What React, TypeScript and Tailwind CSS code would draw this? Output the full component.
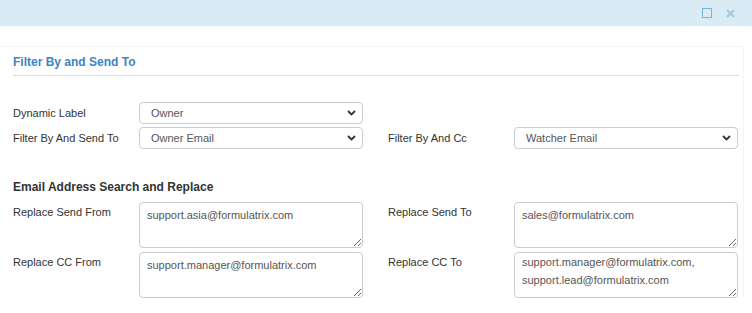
import React from 'react';

const font = { fontFamily: '"Liberation Sans", Arial, sans-serif' };

function Chevron() {
  return (
    <svg
      className="pointer-events-none absolute right-[7px] top-1/2 -translate-y-1/2"
      width="9"
      height="6"
      viewBox="0 0 9 6"
    >
      <path d="M1 1l3.5 3.5L8 1" fill="none" stroke="#333" strokeWidth="1.8" />
    </svg>
  );
}

function SelectRow({ label, value }: { label: string; value: string }) {
  return (
    <div className="flex items-center">
      <label className="w-[126px] shrink-0 text-[11px] leading-[15px] text-[#333]">{label}</label>
      <div className="relative w-[224px]">
        <select
          defaultValue={value}
          className="block h-[22px] w-full appearance-none rounded-[4px] border border-[#ccc] bg-white pl-[11px] text-[11px] text-[#555] outline-none"
        >
          <option>{value}</option>
        </select>
        <Chevron />
      </div>
    </div>
  );
}

function TextRow({ label, value, pad = 'pt-[3px]' }: { label: string; value: string; pad?: string }) {
  return (
    <div className="flex items-start">
      <label className="w-[126px] shrink-0 pt-[3px] text-[11px] leading-[15px] text-[#333]">{label}</label>
      <textarea
        defaultValue={value}
        className={`block h-[46px] w-[224px] overflow-hidden rounded-[4px] border border-[#ccc] bg-white px-[7px] ${pad} text-[11px] leading-[18px] text-[#555] outline-none`}
      />
    </div>
  );
}

export default function App() {
  return (
    <div className="h-[313px] w-[752px] overflow-hidden bg-white" style={font}>
      {/* title bar */}
      <div className="flex h-[26px] items-center justify-end gap-[14px] bg-[#d9ecf5] pr-[17px]">
        <span className="block h-[10px] w-[10px] border-[1.5px] border-[#7eb2d2]" />
        <svg width="9" height="9" viewBox="0 0 9 9">
          <path d="M1 1l7 7M8 1L1 8" stroke="#a8cadd" strokeWidth="2.2" />
        </svg>
      </div>

      <div className="pt-[20px]">
        <div className="mr-[8px] border-t border-r border-[#f5f5f5]">
          <div className="pl-[13px] pr-[4px] pt-[7px]">
            <div className="border-b border-[#ddd] pb-[5px] text-[12px] font-bold leading-[16px] text-[#3c84c3]">
              Filter By and Send To
            </div>

            <div className="mt-[26px] grid grid-cols-[350px_351px] gap-x-[25px] gap-y-[3px]">
              <SelectRow label="Dynamic Label" value="Owner" />
              <div />
              <SelectRow label="Filter By And Send To" value="Owner Email" />
              <SelectRow label="Filter By And Cc" value="Watcher Email" />
            </div>

            <div className="mt-[30px] text-[12px] font-bold leading-[16px] text-[#333]">
              Email Address Search and Replace
            </div>

            <div className="mt-[7px] grid grid-cols-[350px_351px] gap-x-[25px] gap-y-[4px]">
              <TextRow label="Replace Send From" value="support.asia@formulatrix.com" />
              <TextRow label="Replace Send To" value="sales@formulatrix.com" />
              <TextRow label="Replace CC From" value="support.manager@formulatrix.com" />
              <TextRow
                label="Replace CC To"
                value={'support.manager@formulatrix.com,\nsupport.lead@formulatrix.com'}
                pad="pt-0"
              />
            </div>
          </div>
        </div>
      </div>
    </div>
  );
}
